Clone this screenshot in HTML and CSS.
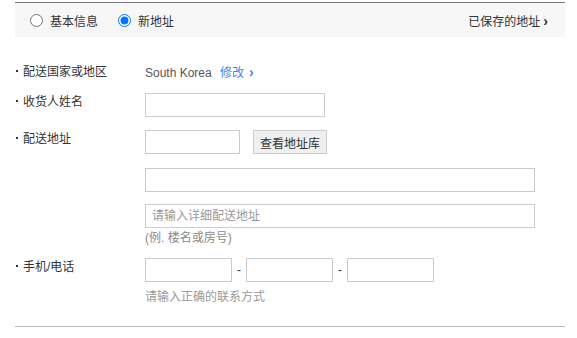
FILE: index.html
```html
<!DOCTYPE html>
<html lang="zh-CN">
<head>
    <meta charset="UTF-8">
    <meta name="viewport" content="width=device-width, initial-scale=1.0">
    <title>配送地址</title>
    <link rel="stylesheet" href="styles.css">
</head>
<body>

    <div class="wrap">
        <div class="addr-tabs">
            <label class="tab"><input type="radio" name="addrType"> 基本信息</label>
            <label class="tab"><input type="radio" name="addrType" checked> 新地址</label>
            <a class="saved-link" href="#">已保存的地址<span class="arrow">›</span></a>
        </div>

        <div class="addr-form">
            <div class="row row-country">
                <div class="label">配送国家或地区</div>
                <div class="field">
                    <span class="country">South Korea</span>
                    <a class="change" href="#">修改<span class="arrow">›</span></a>
                </div>
            </div>

            <div class="row row-name">
                <div class="label">收货人姓名</div>
                <div class="field">
                    <input type="text" class="input input-name">
                </div>
            </div>

            <div class="row row-addr">
                <div class="label">配送地址</div>
                <div class="field">
                    <div class="line">
                        <input type="text" class="input input-zip">
                        <button class="btn-search">查看地址库</button>
                    </div>
                    <div class="line line-gap">
                        <input type="text" class="input input-long">
                    </div>
                    <div class="line line-gap2">
                        <input type="text" class="input input-long" placeholder="请输入详细配送地址">
                    </div>
                    <p class="hint hint-addr">(例. 楼名或房号)</p>
                </div>
            </div>

            <div class="row row-phone">
                <div class="label">手机/电话</div>
                <div class="field">
                    <div class="line">
                        <input type="text" class="input input-phone">
                        <span class="dash">-</span>
                        <input type="text" class="input input-phone">
                        <span class="dash">-</span>
                        <input type="text" class="input input-phone">
                    </div>
                    <p class="hint hint-phone">请输入正确的联系方式</p>
                </div>
            </div>
        </div>

        <div class="bottom-line"></div>
    </div>

</body>
</html>
```

FILE: styles.css
```css
body {
    margin: 0;
    padding-top: 2px;
    font-family: "Liberation Sans", "Noto Sans CJK SC", sans-serif;
    font-size: 12px;
    color: #333;
    background: #fff;
}

.wrap {
    width: 550px;
    margin-left: 15px;
}

a {
    text-decoration: none;
}

/* 顶部切换 */
.addr-tabs {
    display: flex;
    align-items: center;
    height: 34px;
    padding: 0 17px 0 15px;
    border-top: 1px solid #7a7a7a;
    background-color: #f7f7f7;
}

.tab {
    display: flex;
    align-items: center;
    gap: 7px;
    margin-right: 20px;
    color: #333;
    cursor: pointer;
}

.tab input {
    width: 13px;
    height: 13px;
    margin: 0;
}

.saved-link {
    margin-left: auto;
    color: #333;
}

.arrow {
    display: inline-block;
    font-size: 14px;
    font-weight: bold;
    margin-left: 3px;
}

/* 表单 */
.addr-form {
    padding-top: 23px;
}

.row {
    display: grid;
    grid-template-columns: 130px 1fr;
}

.label {
    line-height: 18px;
    color: #333;
}

.label::before {
    content: "";
    display: inline-block;
    width: 2px;
    height: 2px;
    background-color: #333;
    margin: 0 5px 0 1px;
    vertical-align: middle;
    position: relative;
    top: -2px;
}

.row-country {
    line-height: 24px;
}

.row-country .label {
    line-height: 24px;
}

.country {
    color: #555;
    margin-right: 5px;
}

.change {
    color: #3f86f5;
}

.change .arrow {
    margin-left: 5px;
}

.row-name {
    margin-top: 8px;
}

.row-addr {
    margin-top: 13px;
}

.row-phone {
    margin-top: 13px;
}

.line {
    display: flex;
    align-items: center;
}

.line-gap {
    margin-top: 14px;
}

.line-gap2 {
    margin-top: 12px;
}

.input {
    box-sizing: border-box;
    height: 24px;
    border: 1px solid #ccc;
    padding: 0 6px;
    font-family: inherit;
    font-size: 12px;
    color: #333;
    outline: none;
}

.input::placeholder {
    color: #999;
}

.input-name {
    width: 180px;
}

.input-zip {
    width: 95px;
}

.input-long {
    width: 390px;
}

.input-phone {
    width: 87px;
}

.dash {
    width: 14px;
    text-align: center;
    color: #333;
}

.btn-search {
    box-sizing: border-box;
    height: 24px;
    width: 74px;
    margin-left: 13px;
    padding: 0;
    border: 1px solid #ccc;
    background-color: #efefef;
    font-family: inherit;
    font-size: 12px;
    color: #333;
}

.hint {
    margin: 0;
    color: #999;
}

.hint-addr {
    margin-top: 3px;
    line-height: 14px;
    color: #8a8a8a;
}

.hint-phone {
    margin-top: 7px;
    line-height: 16px;
}

.bottom-line {
    margin-top: 21px;
    border-top: 1px solid #bbb;
}
```
